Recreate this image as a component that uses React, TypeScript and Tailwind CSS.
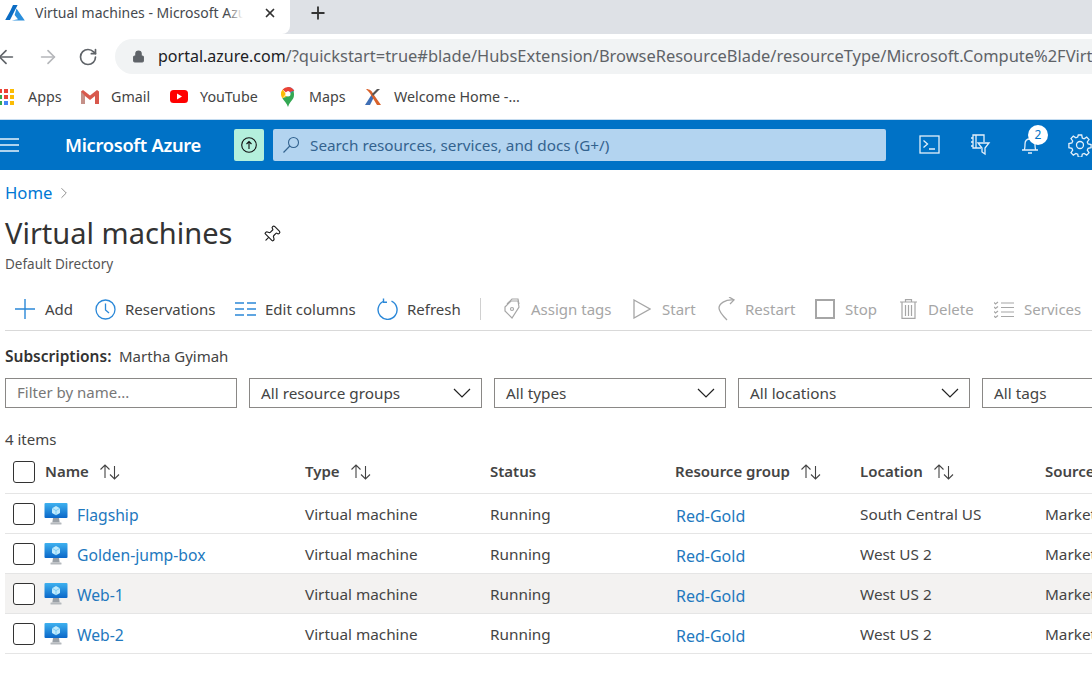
import { Lock, RotateCw, ArrowLeft, ArrowRight, Plus, X, ChevronRight, Pin } from 'lucide-react';

const FONT = "font-['Noto_Sans','Open_Sans',sans-serif]";

function AzureLogo() {
  return (
    <svg width="20" height="16" viewBox="0 0 20 16" className="shrink-0">
      <path d="M8 0h4.6L5 15H0.2L5.2 6z" fill="#0a6cc4" />
      <path d="M11.5 3.5L19.8 15.5H6.8l6.2-1.2-3.4-4.3z" fill="#2a8fdc" />
    </svg>
  );
}

function AppsGrid() {
  const colors = ['#ea4335', '#ea4335', '#fbbc05', '#34a853', '#ea4335', '#fbbc05', '#34a853', '#4285f4', '#fbbc05'];
  return (
    <div className="grid grid-cols-3 gap-[2px] w-[16px] shrink-0">
      {colors.map((c, i) => (
        <span key={i} className="w-[4px] h-[4px]" style={{ background: c }} />
      ))}
    </div>
  );
}

function GmailIcon() {
  return (
    <svg width="18" height="14" viewBox="0 0 18 14">
      <path d="M0 1.5V14h4V6l5 4 5-4v8h4V1.5L16 0 9 5.5 2 0z" fill="#d8584c" />
      <path d="M4 6v8H0V1.5z" fill="#b9b5b1" opacity="0.6" />
    </svg>
  );
}

function YoutubeIcon() {
  return (
    <svg width="18" height="13" viewBox="0 0 18 13">
      <rect width="18" height="13" rx="3.5" fill="#f00" />
      <path d="M7 3.5v6l5-3z" fill="#fff" />
    </svg>
  );
}

function MapsIcon() {
  return (
    <svg width="14" height="20" viewBox="0 0 14 20">
      <path d="M7 0a7 7 0 0 1 6.2 3.8L9.5 8z" fill="#4285f4" />
      <path d="M7 0A7 7 0 0 0 1.6 2.6L5 5.6A2.6 2.6 0 0 1 9 5l4.2-1.2A7 7 0 0 0 7 0z" fill="#ea4335" />
      <path d="M1.6 2.6A7 7 0 0 0 0 7c0 1.6.6 3 1.4 4.2L5 7z" fill="#fbbc05" />
      <path d="M1.4 11.2L9 4.9c.8 1.2.6 3-.6 4l-7 2.3z" fill="#fbbc05" />
      <path d="M1.4 11.2C3 14 6 16 7 20c1-4 4-6.2 5.4-9 .4-1 .6-2 .6-4 0-1.200-.3-2.200-.8-3.200L5 10z" fill="#34a853" />
      <circle cx="7" cy="7" r="2.500" fill="#fff" />
    </svg>
  );
}

function WelcomeIcon() {
  return (
    <svg width="18" height="18" viewBox="0 0 18 18">
      <path d="M1 17L8 6l2 3-4 8z" fill="#3f6fb5" />
      <path d="M2 1c4 0 6 2 8 6l7 10h-4L7 7C6 5 4 3 2 1z" fill="#d9622b" />
      <path d="M16 1L9 8 8 6l5-5z" fill="#555" />
    </svg>
  );
}

function Bookmark({ icon, label, width }: { icon: React.ReactNode; label: string; width: string }) {
  return (
    <div className={`flex items-center gap-[11px] shrink-0 ${width}`}>
      <span className="flex items-center justify-center w-[20px] shrink-0">{icon}</span>
      <span className="text-[14.300px] text-[#444] whitespace-nowrap">{label}</span>
    </div>
  );
}

function TopIcon({ children }: { children: React.ReactNode }) {
  return (
    <svg width="24" height="24" viewBox="0 0 24 24" fill="none" stroke="#e3f0fa" strokeWidth="1.300" className="shrink-0">
      {children}
    </svg>
  );
}

type ToolItem = { icon: React.ReactNode; label: string; width: string; iconWidth: string };

const BLUE = '#2b88d8';
const GREY = '#a6a6a6';

const tools: ToolItem[] = [
  {
    label: 'Add',
    width: 'w-[80px]',
    iconWidth: 'w-[30px]',
    icon: (
      <svg width="20" height="20" viewBox="0 0 20 20" stroke={BLUE} strokeWidth="1.400">
        <path d="M10 0v20M0 10h20" />
      </svg>
    ),
  },
  {
    label: 'Reservations',
    width: 'w-[140px]',
    iconWidth: 'w-[30px]',
    icon: (
      <svg width="21" height="21" viewBox="0 0 21 21" fill="none" stroke={BLUE} strokeWidth="1.300">
        <circle cx="10.500" cy="10.500" r="9.500" />
        <path d="M10.500 4.500v6.500l3.500 3" />
      </svg>
    ),
  },
  {
    label: 'Edit columns',
    width: 'w-[142px]',
    iconWidth: 'w-[30px]',
    icon: (
      <svg width="21" height="14" viewBox="0 0 21 14" stroke={BLUE} strokeWidth="1.600">
        <path d="M0 1h9M12 1h9M0 7h9M12 7h9M0 13h9M12 13h9" />
      </svg>
    ),
  },
  {
    label: 'Refresh',
    width: 'w-[103px]',
    iconWidth: 'w-[30px]',
    icon: (
      <svg width="21" height="22" viewBox="0 0 21 22" fill="none" stroke={BLUE} strokeWidth="1.400">
        <path d="M14.500 3.200A9.500 9.500 0 1 1 6 3.500" />
        <path d="M6.500 0.500L6.500 4.200 10 4.200" />
      </svg>
    ),
  },
];

const disabledTools: ToolItem[] = [
  {
    label: 'Assign tags',
    width: 'w-[130px]',
    iconWidth: 'w-[28px]',
    icon: (
      <svg width="18" height="22" viewBox="0 0 18 22" fill="none" stroke={GREY} strokeWidth="1.200">
        <path d="M2 9l6-6h7l1 6-7 11-7-7z" />
        <path d="M4 6l5-5h6l1 5" />
        <circle cx="9" cy="11" r="1.500" />
      </svg>
    ),
  },
  {
    label: 'Start',
    width: 'w-[85px]',
    iconWidth: 'w-[29px]',
    icon: (
      <svg width="18" height="20" viewBox="0 0 18 20" fill="none" stroke={GREY} strokeWidth="1.300">
        <path d="M1 1l16 9-16 9z" />
      </svg>
    ),
  },
  {
    label: 'Restart',
    width: 'w-[97px]',
    iconWidth: 'w-[27px]',
    icon: (
      <svg width="18" height="24" viewBox="0 0 18 24" fill="none" stroke={GREY} strokeWidth="1.300">
        <path d="M16 3C7 2 1 7 1 11c0 3 4 8 8 12" />
        <path d="M11 0l5 3-4 4" />
      </svg>
    ),
  },
  {
    label: 'Stop',
    width: 'w-[85px]',
    iconWidth: 'w-[30px]',
    icon: <span className="block w-[20px] h-[20px] border-2 border-[#a6a6a6]" />,
  },
  {
    label: 'Delete',
    width: 'w-[94px]',
    iconWidth: 'w-[28px]',
    icon: (
      <svg width="17" height="20" viewBox="0 0 17 20" fill="none" stroke={GREY} strokeWidth="1.200">
        <path d="M0 3h17M5.500 3V.6h6V3M2 3v16.400h13V3M5.500 6v11M8.500 6v11M11.500 6v11" />
      </svg>
    ),
  },
  {
    label: 'Services',
    width: 'w-[98px]',
    iconWidth: 'w-[30px]',
    icon: (
      <svg width="20" height="17" viewBox="0 0 20 17" fill="none" stroke={GREY} strokeWidth="1.200">
        <path d="M7 2h13M7 6.500h13M7 11h13M7 15.500h13" />
        <path d="M0 1.500l1.500 1.500L4 1M0 6l1.500 1.500L4 5.500M0 10.500L1.500 12 4 10M0 15l1.500 1.500L4 14.500" />
      </svg>
    ),
  },
];

function ToolButton({ item, off }: { item: ToolItem; off?: boolean }) {
  return (
    <div className={`flex items-center shrink-0 ${item.width}`}>
      <span className={`flex shrink-0 items-center ${item.iconWidth}`}>{item.icon}</span>
      <span className={`text-[15px] whitespace-nowrap ${off ? 'text-[#a6a6a6]' : 'text-[#444]'}`}>{item.label}</span>
    </div>
  );
}

function FilterSelect({ label, width }: { label: string; width: string }) {
  return (
    <div className={`flex items-center justify-between h-[30px] shrink-0 border border-[#8a8886] pl-[11px] pr-[10px] ${width}`}>
      <span className="text-[15.300px] text-[#444] whitespace-nowrap">{label}</span>
      <svg width="18" height="10" viewBox="0 0 18 10" fill="none" stroke="#222" strokeWidth="1.200" className="shrink-0">
        <path d="M1 1l8 8 8-8" />
      </svg>
    </div>
  );
}

function SortArrows() {
  return (
    <svg width="22" height="16" viewBox="0 0 22 16" fill="none" stroke="#444" strokeWidth="1.100" className="shrink-0">
      <path d="M6 14V1M1.500 5.500L6 1l4.500 4.500M15.500 2v13M11 10.500l4.500 4.500 4.500-4.500" />
    </svg>
  );
}

function HeaderCell({ label, sort, width }: { label: string; sort?: boolean; width: string }) {
  return (
    <div className={`flex items-center gap-[10px] shrink-0 ${width}`}>
      <span className="text-[15px] font-semibold text-[#444] whitespace-nowrap">{label}</span>
      {sort && <SortArrows />}
    </div>
  );
}

function VmIcon() {
  return (
    <svg width="24" height="22" viewBox="0 0 24 22" className="shrink-0 mt-[1px]">
      <defs>
        <linearGradient id="vm-screen" x1="0" y1="0" x2="0" y2="1">
          <stop offset="0" stopColor="#3eb1ef" />
          <stop offset="1" stopColor="#0a67c9" />
        </linearGradient>
      </defs>
      <rect x="0.500" y="0" width="23" height="15" rx="1" fill="url(#vm-screen)" />
      <path d="M9 15h6l.7 4.500H8.300z" fill="#9aa0a6" />
      <rect x="6.500" y="19.500" width="11" height="2" rx="0.500" fill="#b5b9bd" />
      <path d="M12 3l4 2.300v4.600L12 12.200 8 9.900V5.300z" fill="#bfeafc" />
      <path d="M12 7.500l4-2.200M12 7.500L8 5.300M12 7.500v4.700" stroke="#3eb1ef" strokeWidth="0.500" fill="none" />
    </svg>
  );
}

const rows = [
  { name: 'Flagship', location: 'South Central US', source: 'Market' },
  { name: 'Golden-jump-box', location: 'West US 2', source: 'Market' },
  { name: 'Web-1', location: 'West US 2', source: 'Market' },
  { name: 'Web-2', location: 'West US 2', source: 'Market' },
];

export default function App() {
  return (
    <div className={`w-[1092px] h-[682px] overflow-hidden bg-white ${FONT}`}>
      {/* browser tab strip */}
      <div className="flex h-[34px] bg-[#dee1e6]">
        <div className="flex items-center w-[290px] h-full bg-white rounded-br-lg pl-[5px] pb-[8px]">
          <AzureLogo />
          <div className="relative ml-[10px] w-[208px] overflow-hidden">
            <span className="block text-[14px] leading-[18px] text-[#45494e] whitespace-nowrap">
              Virtual machines - Microsoft Azure
            </span>
            <span className="absolute inset-y-0 right-0 w-[16px] bg-gradient-to-r from-transparent to-white" />
          </div>
          <X size={14} strokeWidth={3} color="#333" className="ml-[20px] shrink-0" />
        </div>
        <div className="flex items-center pl-[18px] pb-[8px]">
          <Plus size={20} strokeWidth={2.200} color="#333" />
        </div>
      </div>

      {/* address bar */}
      <div className="flex items-center h-[35px] mt-[5px] overflow-hidden">
        <ArrowLeft size={22} strokeWidth={1.800} color="#5f6368" className="ml-[-5px] shrink-0" />
        <ArrowRight size={22} strokeWidth={1.800} color="#b5b7ba" className="ml-[20px] shrink-0" />
        <RotateCw size={20} strokeWidth={2} color="#5f6368" className="ml-[19px] shrink-0" />
        <div className="flex items-center ml-[17px] h-[35px] grow rounded-l-[18px] bg-[#f1f3f4] pl-[17px] overflow-hidden">
          <Lock size={13} fill="#5f6368" color="#5f6368" className="shrink-0" />
          <span className="ml-[13px] text-[16.450px] whitespace-nowrap text-[#5f6368]">
            <span className="text-[16px] text-[#202124]">portal.azure.com</span>
            /?quickstart=true#blade/HubsExtension/BrowseResourceBlade/resourceType/Microsoft.Compute%2FVirtualMachines
          </span>
        </div>
      </div>

      {/* bookmarks */}
      <div className="flex items-center h-[46px] border-b border-[#c5dcf0]">
        <div className="flex items-center gap-[12px] shrink-0 w-[80px]">
          <span className="ml-[-2px] flex w-[18px] shrink-0"><AppsGrid /></span>
          <span className="text-[14.300px] text-[#444] whitespace-nowrap">Apps</span>
        </div>
        <Bookmark icon={<GmailIcon />} label="Gmail" width="w-[89px]" />
        <Bookmark icon={<YoutubeIcon />} label="YouTube" width="w-[109px]" />
        <Bookmark icon={<MapsIcon />} label="Maps" width="w-[85px]" />
        <Bookmark icon={<WelcomeIcon />} label="Welcome Home -..." width="w-[200px]" />
      </div>

      {/* azure top bar */}
      <div className="flex items-center h-[50px] bg-[#0072c6]">
        <svg width="19" height="14" viewBox="0 0 19 14" stroke="#e8f3fb" strokeWidth="1.300" className="shrink-0">
          <path d="M0 1h19M0 7h19M0 13h19" />
        </svg>
        <span className="ml-[46px] w-[169px] text-[18.300px] font-semibold tracking-[-0.3px] text-white whitespace-nowrap">Microsoft Azure</span>
        <div className="flex items-center justify-center w-[30px] h-[32px] rounded-[2px] bg-[#b4f0dc] shrink-0">
          <svg width="16" height="16" viewBox="0 0 16 16" fill="none" stroke="#111" strokeWidth="1.100">
            <circle cx="8" cy="8" r="7.300" />
            <path d="M8 12V4.500M5.500 7L8 4.500 10.500 7" />
          </svg>
        </div>
        <div className="flex items-center ml-[9px] w-[613px] h-[32px] shrink-0 rounded-[2px] bg-[#b3d4f0] pl-[9px]">
          <svg width="18" height="18" viewBox="0 0 18 18" fill="none" stroke="#33638f" strokeWidth="1.100" className="shrink-0">
            <circle cx="11.500" cy="6.500" r="5" />
            <path d="M7.800 10L1.500 16.500" />
          </svg>
          <span className="ml-[10px] text-[15.300px] text-[#33638f] whitespace-nowrap">Search resources, services, and docs (G+/)</span>
        </div>
        <div className="flex items-center ml-[32px] gap-[26px]">
          <TopIcon>
            <rect x="2" y="3" width="19" height="17" />
            <path d="M5.500 7.500l4 3.500-4 3.500M11 16h6" />
          </TopIcon>
          <TopIcon>
            <path d="M13 15H5V2h11v7M5 5H3M5 9H3M5 13H3M8 2v13" />
            <path d="M10 10h11l-4 5v6l-3-2v-4z" />
          </TopIcon>
          <div className="relative shrink-0">
            <TopIcon>
              <path d="M6 17c1-1 1-3 1-6 0-3 2-5 5-5s5 2 5 5c0 3 0 5 1 6zM4 17h16M10 20h4" />
            </TopIcon>
            <span className="absolute top-[-8px] left-[10px] flex items-center justify-center w-[20px] h-[20px] rounded-full bg-white text-[12px] text-[#0072c6]">
              2
            </span>
          </div>
          <TopIcon>
            <circle cx="12" cy="12" r="3.500" />
            <path d="M10.300 2h3.400l.6 3 1.800.8 2.600-1.700 2.300 2.400-1.700 2.500.8 1.900 3 .6v3.200l-3 .6-.8 1.900 1.700 2.500-2.300 2.400-2.600-1.700-1.800.8-.6 3h-3.400l-.6-3-1.800-.8-2.600 1.700-2.300-2.400 1.700-2.500-.8-1.900-3-.6V10.500l3-.6.8-1.900-1.700-2.500 2.300-2.400 2.600 1.700 1.800-.8z" />
          </TopIcon>
        </div>
      </div>

      {/* page */}
      <div className="pl-[5px]">
        <div className="flex items-center h-[46px] text-[16.700px] text-[#0078d4]">
          Home
          <ChevronRight size={18} strokeWidth={1.100} color="#777" className="ml-[3px]" />
        </div>
        <div className="flex items-center h-[32px]">
          <h1 className="text-[29px] leading-none text-[#333] whitespace-nowrap">Virtual machines</h1>
          <Pin size={19} strokeWidth={1.500} color="#222" className="ml-[30px] mt-[4px] rotate-45" />
        </div>
        <div className="mt-[6px] text-[13.500px] leading-[20px] text-[#555]">Default Directory</div>

        {/* command bar */}
        <div className="flex items-center h-[43px] mt-[14px] pl-[10px] border-b border-[#d9d9d9] overflow-hidden">
          {tools.map((t) => (
            <ToolButton key={t.label} item={t} />
          ))}
          <span className="w-px h-[22px] bg-[#d0d0d0] mr-[22px] shrink-0" />
          {disabledTools.map((t) => (
            <ToolButton key={t.label} item={t} off />
          ))}
        </div>

        <div className="mt-[14px] text-[15px] leading-[22px] text-[#444] whitespace-nowrap">
          <span className="inline-block w-[114px] font-semibold text-[15.500px] text-[#333]">Subscriptions:</span>Martha Gyimah
        </div>

        {/* filters */}
        <div className="flex items-center gap-[12px] mt-[11px]">
          <div className="flex items-center h-[30px] w-[232px] shrink-0 pb-[2px] border border-[#8a8886] pl-[11px] text-[15px] text-[#777]">
            Filter by name...
          </div>
          <FilterSelect label="All resource groups" width="w-[233px]" />
          <FilterSelect label="All types" width="w-[232px]" />
          <FilterSelect label="All locations" width="w-[232px]" />
          <FilterSelect label="All tags" width="w-[232px]" />
        </div>

        <div className="mt-[20px] text-[15px] leading-[22px] text-[#444]">4 items</div>

        {/* table */}
        <div className="flex items-center h-[44px] border-b border-[#e5e5e5]">
          <span className="block w-[22px] h-[22px] ml-[8px] mr-[10px] shrink-0 rounded-[3px] border border-[#333]" />
          <HeaderCell label="Name" sort width="w-[260px]" />
          <HeaderCell label="Type" sort width="w-[185px]" />
          <HeaderCell label="Status" width="w-[185px]" />
          <HeaderCell label="Resource group" sort width="w-[185px]" />
          <HeaderCell label="Location" sort width="w-[185px]" />
          <HeaderCell label="Source" width="w-[60px]" />
        </div>
        {rows.map((r) => (
          <div
            key={r.name}
            className={`flex items-center h-[40px] border-b border-[#e5e5e5] text-[15.300px] ${r.name === 'Web-1' ? 'bg-[#f3f2f1]' : ''}`}
          >
            <span className="block w-[22px] h-[22px] ml-[8px] mr-[9px] shrink-0 rounded-[3px] border border-[#333] bg-white" />
            <div className="flex items-center w-[261px] shrink-0">
              <VmIcon />
              <span className="ml-[9px] pt-[4px] text-[15.700px] text-[#2278be] whitespace-nowrap">{r.name}</span>
            </div>
            <span className="w-[185px] shrink-0 pt-[1px] text-[#444]">Virtual machine</span>
            <span className="w-[185px] shrink-0 pt-[1px] text-[#444]">Running</span>
            <span className="w-[185px] shrink-0 text-[16px] text-[#2278be] pt-[4px] pl-[1px]">Red-Gold</span>
            <span className="w-[185px] shrink-0 pt-[1px] text-[#444] whitespace-nowrap">{r.location}</span>
            <span className="pt-[1px] text-[#444] whitespace-nowrap">{r.source}</span>
          </div>
        ))}
      </div>
    </div>
  );
}
